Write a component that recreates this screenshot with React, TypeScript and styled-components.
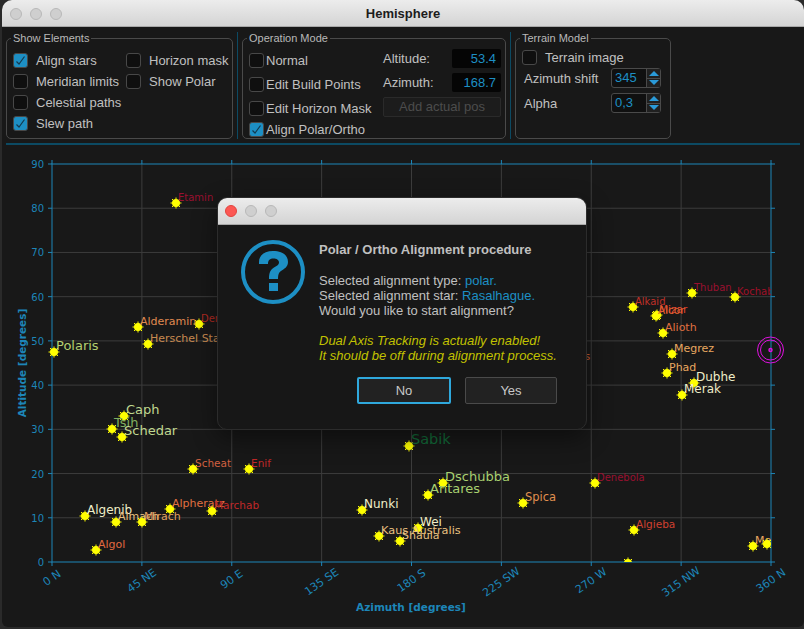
import styled, { createGlobalStyle } from "styled-components";

const GlobalStyle = createGlobalStyle`
  html, body {
    margin: 0;
    padding: 0;
    background: #2a2a2a;
  }
  body {
    width: 804px;
    height: 629px;
    overflow: hidden;
    font-family: "Liberation Sans", Arial, sans-serif;
  }
`;

const Window = styled.div`
  position: relative;
  box-sizing: border-box;
  width: 802px;
  height: 627px;
  margin-left: 2px;
  background: #181818;
  border-radius: 10px 10px 6px 6px;
  overflow: hidden;
`;

const TitleBar = styled.div`
  position: relative;
  box-sizing: border-box;
  height: 27px;
  background: linear-gradient(#ececec, #d4d4d4);
  border-bottom: 1px solid #a8a8a8;
  display: flex;
  align-items: center;
  justify-content: center;
  color: #1c1c1c;
  font-size: 13px;
  font-weight: 700;
`;

const Lights = styled.div<{ $inset: number }>`
  position: absolute;
  left: ${(p) => p.$inset}px;
  top: ${(p) => p.$inset}px;
  display: flex;
  gap: 8px;
`;

const Light = styled.span<{ $red?: boolean }>`
  width: 12px;
  height: 12px;
  box-sizing: border-box;
  border-radius: 50%;
  background: ${(p) => (p.$red ? "#fc5753" : "#cfcfcf")};
  border: 1px solid ${(p) => (p.$red ? "#e0443e" : "#b8b8b8")};
`;

const Toolbar = styled.div`
  display: flex;
  align-items: flex-start;
  height: 116px;
  padding: 5px 0 0 4px;
  box-sizing: border-box;
`;

const Group = styled.fieldset<{ $width: number }>`
  box-sizing: border-box;
  width: ${(p) => p.$width}px;
  height: 107px;
  margin: 0;
  padding: 0;
  border: 1px solid #4a4a4a;
  border-radius: 5px;
  color: #c0c0c0;
  font-size: 13px;
  min-width: 0;

  legend {
    font-size: 11px;
    padding: 0 2px;
    margin-left: 4px;
    line-height: 12px;
    color: #b8b8b8;
  }
`;

const Divider = styled.div<{ $gap: number }>`
  width: 1px;
  height: 107px;
  background: #0c4a63;
  margin: 0 ${(p) => p.$gap}px 0 4px;
`;

const Rule = styled.div`
  height: 2px;
  margin: 0 4px;
  background: #0c4a63;
`;

const BoxGrid = styled.div`
  display: grid;
  grid-template-columns: 113px 1fr;
  grid-auto-rows: 21px;
  padding: 6px 0 0 6px;
`;

const CheckRow = styled.label<{ $gap?: number; $height?: number }>`
  display: flex;
  align-items: center;
  gap: ${(p) => p.$gap ?? 8}px;
  height: ${(p) => p.$height ?? 21}px;
  white-space: nowrap;
`;

const Box = styled.span<{ $on?: boolean }>`
  box-sizing: border-box;
  flex: none;
  width: 15px;
  height: 15px;
  border-radius: 3px;
  background: ${(p) => (p.$on ? "#1d8fc4" : "#0f0f0f")};
  border: 1px solid #484848;
  display: flex;
  align-items: center;
  justify-content: center;
`;

const Tick = () => (
  <svg width="11" height="11" viewBox="0 0 11 11">
    <path d="M1.5 6.5 L4 9 L9.5 1.5" fill="none" stroke="#123a50" strokeWidth="1.2" />
  </svg>
);

const Check = ({ label, on, gap, height }: { label: string; on?: boolean; gap?: number; height?: number }) => (
  <CheckRow $gap={gap} $height={height}>
    <Box $on={on}>{on && <Tick />}</Box>
    {label}
  </CheckRow>
);

const ModeColumns = styled.div`
  display: flex;
  padding: 4px 0 0 6px;
`;

const ModeChecks = styled.div`
  width: 134px;
  display: flex;
  flex-direction: column;
`;

const Readouts = styled.div`
  display: grid;
  grid-template-columns: 69px 49px;
  grid-auto-rows: 19px;
  row-gap: 5px;
  padding-top: 1px;
  align-items: center;
`;

const Readout = styled.div`
  box-sizing: border-box;
  height: 19px;
  background: #050505;
  border-radius: 2px;
  color: #1d8fc4;
  font-size: 13px;
  line-height: 19px;
  text-align: right;
  padding-right: 5px;
`;

const DisabledButton = styled.div`
  grid-column: 1 / 3;
  box-sizing: border-box;
  height: 20px;
  border: 1px solid #2a2a2a;
  border-radius: 2px;
  background: #1c1c1c;
  color: #4c4c4c;
  line-height: 18px;
  text-align: center;
`;

const TerrainRows = styled.div`
  display: flex;
  flex-direction: column;
  padding: 3px 0 0 6px;
`;

const SpinRow = styled.div`
  display: flex;
  align-items: center;
  height: 20px;
  margin-bottom: 5px;
  padding-left: 2px;
`;

const SpinLabel = styled.span`
  width: 87px;
`;

const Spin = styled.div`
  display: flex;
  box-sizing: border-box;
  width: 50px;
  height: 20px;
  border: 1px solid #4a4a4a;
  border-radius: 3px;
  background: #101010;
  color: #1d8fc4;
  font-size: 13px;
  line-height: 18px;
`;

const SpinValue = styled.span`
  flex: 1;
  padding-left: 3px;
`;

const SpinArrows = styled.span`
  width: 13px;
  border-left: 1px solid #4a4a4a;
  display: flex;
  flex-direction: column;
`;

const SpinArrow = styled.span<{ $down?: boolean }>`
  flex: 1;
  display: flex;
  align-items: center;
  justify-content: center;
  background: #202020;
  & + & {
    border-top: 1px solid #4a4a4a;
  }
  &::after {
    content: "";
    border-left: 5px solid transparent;
    border-right: 5px solid transparent;
    ${(p) => (p.$down ? "border-top: 5px solid #2a9ad8;" : "border-bottom: 5px solid #2a9ad8;")}
  }
`;

const PlotArea = styled.div`
  height: 482px;
`;

const PlotFrame = styled.svg`
  display: block;
  font-family: "DejaVu Sans", sans-serif;
`;

const Dialog = styled.div`
  position: absolute;
  left: 215px;
  top: 197px;
  width: 370px;
  height: 233px;
  box-sizing: border-box;
  background: #171717;
  border: 1px solid #2c2c2c;
  border-radius: 10px;
  box-shadow: 0 8px 24px rgba(0, 0, 0, 0.45);
  overflow: hidden;
`;

const DialogBody = styled.div`
  display: flex;
  padding: 15px 0 0 23px;
`;

const DialogIcon = styled.svg`
  flex: none;
  margin-right: 14px;
`;

const DialogText = styled.div`
  color: #c0c0c0;
  font-size: 13px;
  line-height: 15px;
`;

const Heading = styled.div`
  font-weight: 700;
  margin: 2px 0 16px;
`;

const Paragraph = styled.div`
  margin-bottom: 15px;
`;

const Warning = styled.div`
  color: #c2c200;
  font-style: italic;
`;

const Accent = styled.span`
  color: #1d8fc4;
`;

const DialogButtons = styled.div`
  display: flex;
  gap: 14px;
  padding: 14px 0 0 139px;
`;

const DialogButton = styled.div<{ $focus?: boolean }>`
  box-sizing: border-box;
  width: ${(p) => (p.$focus ? 94 : 92)}px;
  height: 27px;
  border: ${(p) => (p.$focus ? "2px solid #2fa8dc" : "1px solid #4a4a4a")};
  border-radius: 2px;
  background: #222222;
  color: #c8c8c8;
  font-size: 13px;
  line-height: ${(p) => (p.$focus ? 23 : 25)}px;
  text-align: center;
`;

// all chart coordinates are page pixels, the svg viewBox is offset to match
const X0 = 52;
const X360 = 771;
const Y90 = 164;
const Y0 = 562;
const px = (az: number) => X0 + (az / 360) * (X360 - X0);
const py = (alt: number) => Y0 - (alt / 90) * (Y0 - Y90);

const AXIS = "#1d86b8";
const GRID = "#3c3c3c";

const xTicks = ["0 N", "45 NE", "90 E", "135 SE", "180 S", "225 SW", "270 W", "315 NW", "360 N"];
const yTicks = [0, 10, 20, 30, 40, 50, 60, 70, 80, 90];

interface Star {
  name: string;
  x: number;
  y: number;
  color: string;
  size: number;
}

const stars: Star[] = [
  { name: "Etamin", x: 176, y: 203, color: "#9a1030", size: 10 },
  { name: "Deneb", x: 199, y: 324, color: "#b02a22", size: 10 },
  { name: "Alderamin", x: 138, y: 327, color: "#e08a50", size: 11 },
  { name: "Herschel Star", x: 148, y: 344, color: "#c88a50", size: 11 },
  { name: "Polaris", x: 54, y: 352, color: "#b4d070", size: 13 },
  { name: "Caph", x: 124, y: 416, color: "#c0d890", size: 13 },
  { name: "Tsih", x: 112, y: 429, color: "#80b060", size: 13 },
  { name: "Schedar", x: 122, y: 437, color: "#c0d890", size: 13 },
  { name: "Scheat", x: 193, y: 469, color: "#d06040", size: 10.5 },
  { name: "Enif", x: 249, y: 469, color: "#c02828", size: 10.5 },
  { name: "Algenib", x: 85, y: 516, color: "#f0eec8", size: 12 },
  { name: "Almach", x: 116, y: 522, color: "#e8c080", size: 11 },
  { name: "Mirach", x: 142, y: 522, color: "#e0a060", size: 11 },
  { name: "Alpheratz", x: 170, y: 509, color: "#e07040", size: 11 },
  { name: "Marchab", x: 212, y: 511, color: "#c02828", size: 10.5 },
  { name: "Algol", x: 96, y: 550, color: "#e06a40", size: 11 },
  { name: "Sabik", x: 409, y: 446, color: "#126a38", size: 14.5 },
  { name: "Dschubba", x: 443, y: 483, color: "#a8d070", size: 13 },
  { name: "Antares", x: 428, y: 495, color: "#a8d070", size: 13 },
  { name: "Nunki", x: 362, y: 510, color: "#f0eec8", size: 12 },
  { name: "Wei", x: 418, y: 528, color: "#f0eec8", size: 12 },
  { name: "Kaus Australis", x: 379, y: 536, color: "#e8c080", size: 11.3 },
  { name: "Shaula", x: 400, y: 541, color: "#e8c080", size: 11 },
  { name: "Spica", x: 523, y: 503, color: "#e09050", size: 11.5 },
  { name: "Denebola", x: 595, y: 483, color: "#9a1030", size: 10 },
  { name: "Algieba", x: 634, y: 530, color: "#d04030", size: 10.5 },
  { name: "Arcturus", x: 544, y: 362, color: "#c86034", size: 10.5 },
  { name: "Alkaid", x: 633, y: 307, color: "#c03028", size: 10 },
  { name: "Mizar", x: 657, y: 315, color: "#e04830", size: 10.5 },
  { name: "Alcor", x: 656, y: 316, color: "#e06030", size: 10.5 },
  { name: "Alioth", x: 663, y: 333, color: "#e07040", size: 11 },
  { name: "Thuban", x: 692, y: 293, color: "#9a1030", size: 10 },
  { name: "Kochab", x: 735, y: 297, color: "#a01028", size: 10 },
  { name: "Megrez", x: 672, y: 354, color: "#e8a860", size: 11 },
  { name: "Phad", x: 667, y: 373, color: "#e8a860", size: 11 },
  { name: "Dubhe", x: 694, y: 383, color: "#f0eec8", size: 12 },
  { name: "Merak", x: 682, y: 395, color: "#f0eec8", size: 12 },
  { name: "Mebsuta", x: 753, y: 546, color: "#e8a860", size: 11 },
];

const StarMark = ({ x, y }: { x: number; y: number }) => (
  <g>
    <circle cx={x} cy={y} r={4} fill="#ffff00" />
    <path
      d={`M${x - 5.5} ${y}H${x + 5.5}M${x} ${y - 5.5}V${y + 5.5}M${x - 4} ${y - 4}L${x + 4} ${y + 4}M${x - 4} ${y + 4}L${x + 4} ${y - 4}`}
      stroke="#ffff00"
      strokeWidth="1"
    />
  </g>
);

const Plot = () => (
  <PlotFrame width={802} height={482} viewBox="2 145 802 482">
    <defs>
      <clipPath id="plot-clip">
        <rect x={X0 - 6} y={Y90 - 6} width={X360 - X0 + 6} height={Y0 - Y90 + 6} />
      </clipPath>
    </defs>
    {xTicks.map((label, i) => {
      const x = px(i * 45);
      const cy = 574 + label.length * 1.33;
      return (
        <g key={label}>
          {i > 0 && i < 8 && <line x1={x} x2={x} y1={Y90} y2={Y0} stroke={GRID} />}
          <line x1={x} x2={x} y1={Y90 - 4} y2={Y90} stroke={AXIS} />
          <line x1={x} x2={x} y1={Y0} y2={Y0 + 4} stroke={AXIS} />
          <text
            x={x}
            y={cy + 3.5}
            fontSize="11"
            fill={AXIS}
            textAnchor="middle"
            transform={`rotate(-35 ${x} ${cy})`}
          >
            {label}
          </text>
        </g>
      );
    })}
    {yTicks.map((v) => {
      const y = py(v);
      return (
        <g key={v}>
          {v > 0 && v < 90 && <line x1={X0} x2={X360} y1={y} y2={y} stroke={GRID} />}
          <line x1={X0 - 4} x2={X0} y1={y} y2={y} stroke={AXIS} />
          <line x1={X360} x2={X360 + 4} y1={y} y2={y} stroke={AXIS} />
          <text x={X0 - 8} y={y + 4} fontSize="10" fill={AXIS} textAnchor="end">
            {v}
          </text>
        </g>
      );
    })}
    <rect x={X0} y={Y90} width={X360 - X0} height={Y0 - Y90} fill="none" stroke={AXIS} />
    <g clipPath="url(#plot-clip)">
      {stars.map((s) => (
        <g key={s.name}>
          <StarMark x={s.x} y={s.y} />
          <text x={s.x + 2} y={s.y - 2} fontSize={s.size} fill={s.color}>
            {s.name}
          </text>
        </g>
      ))}
      <StarMark x={628} y={563} />
      <StarMark x={767} y={544} />
    </g>
    <g fill="none" stroke="#e010e0">
      <circle cx={770.5} cy={350} r={13} />
      <circle cx={770.5} cy={350} r={10} />
      <circle cx={770.5} cy={350} r={1.5} strokeWidth="1.5" />
    </g>
    <text x={411} y={611} fontSize="10.5" fontWeight="700" fill={AXIS} textAnchor="middle">
      Azimuth [degrees]
    </text>
    <text
      x={26}
      y={363}
      fontSize="10.5"
      fontWeight="700"
      fill={AXIS}
      textAnchor="middle"
      transform="rotate(-90 26 363)"
    >
      Altitude [degrees]
    </text>
  </PlotFrame>
);

export default function App() {
  return (
    <>
      <GlobalStyle />
      <Window>
        <TitleBar>
          <Lights $inset={8}>
            <Light />
            <Light />
            <Light />
          </Lights>
          Hemisphere
        </TitleBar>
        <Toolbar>
          <Group $width={227}>
            <legend>Show Elements</legend>
            <BoxGrid>
              <Check label="Align stars" on />
              <Check label="Horizon mask" />
              <Check label="Meridian limits" />
              <Check label="Show Polar" />
              <Check label="Celestial paths" />
              <span />
              <Check label="Slew path" on />
            </BoxGrid>
          </Group>
          <Divider $gap={4} />
          <Group $width={264}>
            <legend>Operation Mode</legend>
            <ModeColumns>
              <ModeChecks>
                <Check label="Normal" gap={2} height={24} />
                <Check label="Edit Build Points" gap={2} height={24} />
                <Check label="Edit Horizon Mask" gap={2} height={24} />
                <Check label="Align Polar/Ortho" on gap={2} height={18} />
              </ModeChecks>
              <Readouts>
                <span>Altitude:</span>
                <Readout>53.4</Readout>
                <span>Azimuth:</span>
                <Readout>168.7</Readout>
                <DisabledButton>Add actual pos</DisabledButton>
              </Readouts>
            </ModeColumns>
          </Group>
          <Divider $gap={4} />
          <Group $width={156}>
            <legend>Terrain Model</legend>
            <TerrainRows>
              <Check label="Terrain image" />
              <SpinRow>
                <SpinLabel>Azimuth shift</SpinLabel>
                <Spin>
                  <SpinValue>345</SpinValue>
                  <SpinArrows>
                    <SpinArrow />
                    <SpinArrow $down />
                  </SpinArrows>
                </Spin>
              </SpinRow>
              <SpinRow>
                <SpinLabel>Alpha</SpinLabel>
                <Spin>
                  <SpinValue>0,3</SpinValue>
                  <SpinArrows>
                    <SpinArrow />
                    <SpinArrow $down />
                  </SpinArrows>
                </Spin>
              </SpinRow>
            </TerrainRows>
          </Group>
        </Toolbar>
        <Rule />
        <PlotArea>
          <Plot />
        </PlotArea>
        <Dialog>
          <TitleBar>
            <Lights $inset={7}>
              <Light $red />
              <Light />
              <Light />
            </Lights>
          </TitleBar>
          <DialogBody>
            <DialogIcon width="64" height="64" viewBox="0 0 64 64">
              <circle cx="32" cy="32" r="30" fill="none" stroke="#1d8fc4" strokeWidth="4" />
              <path
                d="M18 22 C18 15 24 11 32 11 C41 11 47 15 47 22 C47 27 43 29 40 31 C38 32.5 37 34 37 39 H28 C28 33 29 30 33 27.5 C36 25.5 38 25 38 22.5 C38 20 35.5 18.5 32.5 18.5 C29 18.5 27 20 27 24 H18 Z"
                fill="#1d8fc4"
              />
              <rect x="28" y="43" width="9" height="8" fill="#1d8fc4" />
            </DialogIcon>
            <DialogText>
              <Heading>Polar / Ortho Alignment procedure</Heading>
              <Paragraph>
                Selected alignment type: <Accent>polar.</Accent>
                <br />
                Selected alignment star: <Accent>Rasalhague.</Accent>
                <br />
                Would you like to start alignment?
              </Paragraph>
              <Warning>
                Dual Axis Tracking is actually enabled!
                <br />
                It should be off during alignment process.
              </Warning>
            </DialogText>
          </DialogBody>
          <DialogButtons>
            <DialogButton $focus>No</DialogButton>
            <DialogButton>Yes</DialogButton>
          </DialogButtons>
        </Dialog>
      </Window>
    </>
  );
}
